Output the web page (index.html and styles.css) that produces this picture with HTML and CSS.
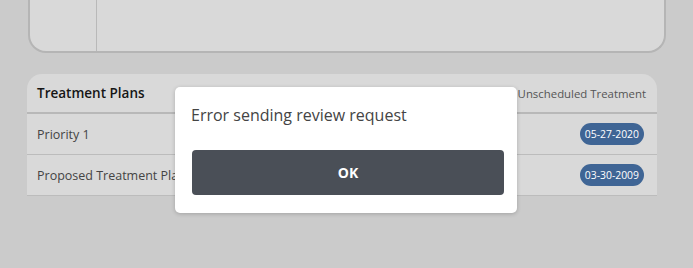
FILE: index.html
```html
<!DOCTYPE html>
<html>
<head>
<meta charset="utf-8">
<link rel="stylesheet" href="styles.css">
</head>
<body>
<div class="page">
  <div class="top-card">
    <div class="top-side"></div>
    <div class="top-main"></div>
  </div>
  <div class="plans">
    <div class="plans-head">
      <span class="plans-title">Treatment Plans</span>
      <span class="plans-sub">Unscheduled Treatment</span>
    </div>
    <div class="plan-row">
      <span class="plan-name">Priority 1</span>
      <span class="badge">05-27-2020</span>
    </div>
    <div class="plan-row">
      <span class="plan-name">Proposed Treatment Plan</span>
      <span class="badge">03-30-2009</span>
    </div>
  </div>
</div>
<div class="modal">
  <div class="modal-text">Error sending review request</div>
  <button class="modal-btn">OK</button>
</div>
</body>
</html>
```
FILE: styles.css
```css
html, body {
  margin: 0;
  padding: 0;
  background: #cbcbcb;
  font-family: "Open Sans", "Noto Sans", sans-serif;
  width: 693px;
  height: 268px;
  overflow: hidden;
}
.page {
  display: flex;
  flex-direction: column;
  padding-left: 27px;
}
.top-card {
  margin-left: 1px;
  width: 634px;
  height: 51px;
  display: flex;
  background: #d9d9d9;
  border: 2px solid #b5b5b5;
  border-top: none;
  border-radius: 0 0 18px 18px;
}
.top-side {
  width: 66px;
  border-right: 1px solid #b9b9b9;
}
.top-main {
  flex: 1;
}
.plans {
  margin-top: 21px;
  width: 630px;
  background: #d9d9d9;
  border-radius: 15px 15px 0 0;
}
.plans-head {
  height: 38px;
  display: flex;
  align-items: center;
  justify-content: space-between;
  padding: 0 11px 0 10px;
  border-bottom: 2px solid #b8b8b8;
}
.plans-title {
  font-size: 13.5px;
  font-weight: 600;
  color: #151515;
}
.plans-sub {
  font-size: 11.4px;
  color: #555;
}
.plan-row {
  height: 40px;
  display: flex;
  align-items: center;
  justify-content: space-between;
  padding: 0 13px 0 10px;
  border-bottom: 1px solid #bcbcbc;
}
.plan-name {
  font-size: 12.5px;
  color: #444;
}
.badge {
  background: #3f6595;
  color: #fff;
  font-size: 10.4px;
  height: 22px;
  line-height: 22px;
  padding: 0 5px;
  border-radius: 11px;
}
.modal {
  position: absolute;
  left: 175px;
  top: 87px;
  width: 342px;
  height: 126px;
  box-sizing: border-box;
  background: #fff;
  border-radius: 5px;
  box-shadow: 0 1px 4px rgba(0,0,0,0.2);
  padding: 16px 13px 18px 17px;
  display: flex;
  flex-direction: column;
}
.modal-text {
  font-size: 16px;
  color: #444;
  line-height: 24px;
  margin-left: -1px;
}
.modal-btn {
  margin-top: 23px;
  height: 45px;
  border: none;
  border-radius: 4px;
  background: #4a4f57;
  color: #fff;
  font-family: "Open Sans", "Noto Sans", sans-serif;
  font-weight: 700;
  font-size: 14px;
}
```
